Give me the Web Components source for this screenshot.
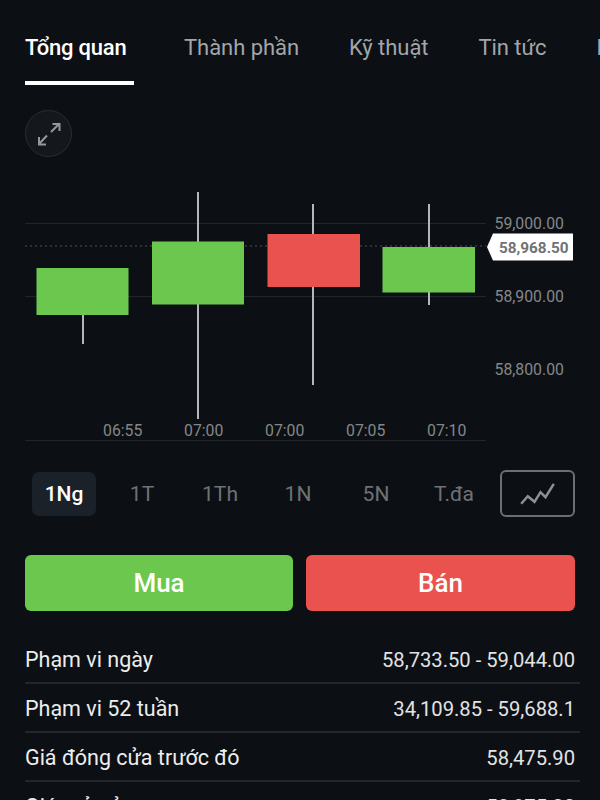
<!DOCTYPE html>
<html lang="vi"><head><meta charset="utf-8"><title>Tổng quan</title>
<style>
html,body{margin:0;padding:0;background:#0c1014;width:600px;height:800px;overflow:hidden}
body{font-family:Roboto,"Liberation Sans",sans-serif;color:#e6e7e8}
</style></head><body>
<app-screen>
  <tab-bar>
    <tab-item active>Tổng quan</tab-item><tab-item>Thành phần</tab-item><tab-item>Kỹ thuật</tab-item><tab-item>Tin tức</tab-item><tab-item>Lịch sử</tab-item>
  </tab-bar>
  <expand-button></expand-button>
  <candle-chart></candle-chart>
  <period-bar>
    <period-item active>1Ng</period-item><period-item>1T</period-item><period-item>1Th</period-item><period-item>1N</period-item><period-item>5N</period-item><period-item>T.đa</period-item>
    <chart-toggle slot="toggle"></chart-toggle>
  </period-bar>
  <trade-buttons></trade-buttons>
  <stat-list>
    <stat-row label="Phạm vi ngày" value="58,733.50 - 59,044.00"></stat-row>
    <stat-row label="Phạm vi 52 tuần" value="34,109.85 - 59,688.1"></stat-row>
    <stat-row label="Giá đóng cửa trước đó" value="58,475.90"></stat-row>
    <stat-row label="Giá mở cửa" value="58,975.00"></stat-row>
  </stat-list>
</app-screen>
<script>
function def(name,html){
  customElements.define(name,class extends HTMLElement{
    constructor(){super();this.attachShadow({mode:'open'}).innerHTML=typeof html==='function'?html(this):html}
  });
}
def('app-screen',`<style>:host{display:flex;flex-direction:column;width:600px;height:800px;overflow:hidden;background:#0c1014}</style><slot></slot>`);
def('tab-bar',`<style>:host{display:flex;height:85px;padding-left:25px;gap:50px;overflow:hidden;white-space:nowrap;flex:none}</style><slot></slot>`);
def('tab-item',`<style>
:host{display:block;flex:none;height:85px;box-sizing:border-box;font-size:22px;line-height:26px;padding:35px 0 0;color:#a2a6a9;letter-spacing:-.05px}
:host([active]){color:#fff;font-weight:500;border-bottom:4px solid #fff;width:109px;letter-spacing:-.2px}
</style><slot></slot>`);
def('expand-button',`<style>
:host{display:flex;align-items:center;justify-content:center;box-sizing:border-box;width:47px;height:47px;margin:25px 0 0 25px;border-radius:50%;background:#14181d;border:1.5px solid #2a2e33;flex:none}
</style><svg width="26" height="26" viewBox="0 0 26 26" fill="none" stroke="#94979b" stroke-width="2"><path d="M15 11 23.500 2.500M16.500 3H23.500V10M11 14.500 3 23M3 16V23.500H10"/></svg>`);
const cand=[[36.5,268,92,47,83,315,344,'#6bc74e'],[152,241.5,92,63,198,192,419,'#6bc74e'],[267.5,234,92.500,53,313,204,385,'#e9524e'],[382.5,247,92.5,45.5,429,204,305,'#6bc74e']];
def('candle-chart',`<style>:host{display:block;height:314px;flex:none}svg{display:block}text{font-family:Roboto,"Liberation Sans",sans-serif;font-size:15.8px;fill:#84878a}</style>
<svg width="600" height="314" viewBox="0 157 600 314">
<g stroke="#22262a" stroke-width="1"><path d="M25 223.500H486M25 296.500H486M25 440.500H486"/></g>
<path d="M25 246H486" stroke="#4e5154" stroke-width="1" stroke-dasharray="2 3"/>
${cand.map(c=>`<path d="M${c[4]} ${c[5]}V${c[6]}" stroke="#b4b6b8" stroke-width="2"/><rect x="${c[0]}" y="${c[1]}" width="${c[2]}" height="${c[3]}" fill="${c[7]}"/>`).join('')}
<text x="494.500" y="229">59,000.00</text><text x="494.500" y="302">58,900.00</text><text x="494.500" y="375">58,800.00</text>
<text x="103" y="436">06:55</text><text x="184" y="436">07:00</text><text x="265" y="436">07:00</text><text x="346" y="436">07:05</text><text x="427" y="436">07:10</text>
<path d="M487 247 493 233.500H573V260.500H493Z" fill="#fff"/>
<text x="499" y="253" style="fill:#6f7276;font-weight:700;font-size:15.3px">58,968.50</text>
</svg>`);
def('period-bar',`<style>
:host{display:flex;align-items:center;height:47px;margin-top:-1px;padding:0 25px 0 32px;flex:none}
.items{display:flex;flex:1}
</style><div class="items"><slot></slot></div><slot name="toggle"></slot>`);
def('period-item',`<style>
:host{display:flex;align-items:center;justify-content:center;width:64px;height:44px;margin-right:14px;font-size:21px;color:#6e7275;border-radius:7px;flex:none}
:host([active]){background:#1b2128;color:#fff;font-weight:500}
</style><slot></slot>`);
def('chart-toggle',`<style>
:host{display:flex;align-items:center;justify-content:center;box-sizing:border-box;width:75px;height:47px;border:2px solid #6b6f73;border-radius:6px;flex:none}
</style><svg width="36" height="24" viewBox="0 0 36 24" fill="none" stroke="#8d9093" stroke-width="2.500"><path d="M1.200 21.800 7.800 14.200 14.500 19.800 20.500 10.200 25.500 15.200 33.800 1.800"/></svg>`);
def('trade-buttons',`<style>
:host{display:grid;grid-template-columns:268px 269px;gap:13px;margin:38px 25px 0;flex:none}
div{height:56px;border-radius:6px;display:flex;align-items:center;justify-content:center;color:#fff;font-size:26px;font-weight:500}
.b{background:#6bc74e}.s{background:#e9524e}
</style><div class="b">Mua</div><div class="s">Bán</div>`);
def('stat-list',`<style>:host{display:block;margin:24px 20px 0 25px;flex:none}</style><slot></slot>`);
def('stat-row',h=>`<style>
:host{display:flex;justify-content:space-between;align-items:center;box-sizing:border-box;height:49px;padding:2px 5px 0 0;border-bottom:2px solid #23272b;color:#eceded}
.l{font-size:21.5px}.v{font-size:20.2px;color:#e2e3e4}
</style><span class="l">${h.getAttribute('label')}</span><span class="v">${h.getAttribute('value')}</span>`);
</script>
</body></html>
